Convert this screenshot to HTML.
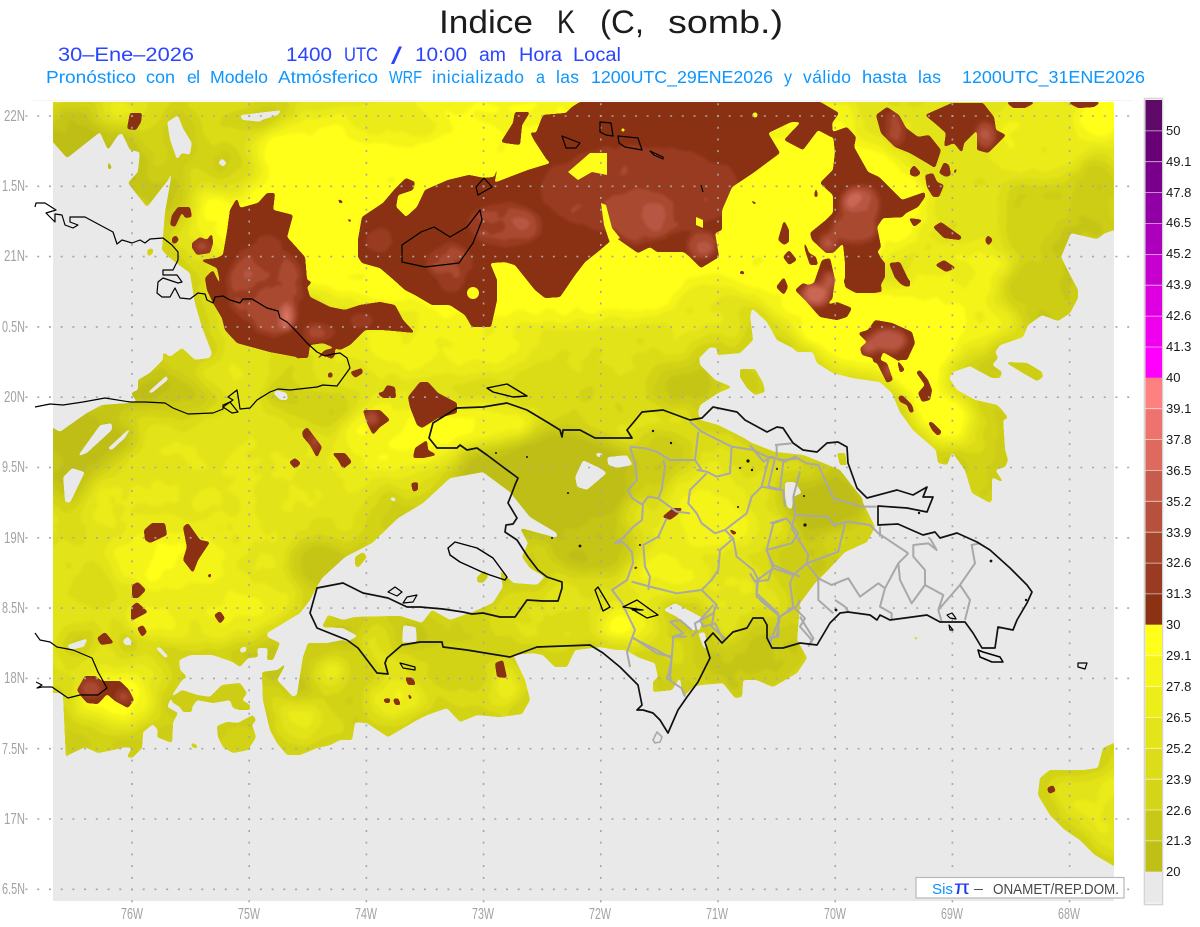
<!DOCTYPE html>
<html lang="es"><head><meta charset="utf-8"><title>Indice K</title>
<style>html,body{margin:0;padding:0;background:#fff;width:1200px;height:927px;overflow:hidden}svg{display:block}text{font-family:"Liberation Sans",sans-serif}</style>
</head><body>
<svg xmlns="http://www.w3.org/2000/svg" width="1200" height="927" viewBox="0 0 1200 927">
<defs>
<clipPath id="plot"><rect x="53" y="102" width="1061" height="799"/></clipPath>
<path id="yp" fill-rule="evenodd" clip-rule="evenodd" d="M30,130L30,80L1150,80L1150,225L1114,230 1105,233 1097,239 1071,233 1061,257 1069,273 1078,290 1078,298 1070,313 1058,321 1042,315 1028,325 1023,337 1000,345 995,352 998,358 992,365 1002,372 1000,378 992,378 970,366 953,372 949,378 957,390 975,400 997,405 1002,410 1008,418 1003,420 1005,450 1008,460 1005,467 995,470 1004,483 992,477 992,500 990,503 972,493 965,470 952,452 947,465 938,463 936,450 913,430 900,412 892,393 880,382 853,378 833,373 817,363 813,352 797,352 793,348 777,340 767,322 752,308 750,317 753,340 740,353 717,355 717,348 710,347 699,358 700,365 715,380 732,387 718,393 700,405 698,412 700,420 718,425 742,437 752,443 775,452 803,455 823,463 840,470 853,487 862,498 863,503 875,527 867,542 845,552 828,570 815,583 800,603 797,640 807,658 797,673 773,687 757,680 743,680 742,697 735,698 723,683 700,685 693,687 683,697 680,677 672,690 653,692 653,682 658,677 655,663 640,658 625,650 617,650 600,647 575,650 567,667 555,667 543,655 533,653 513,655 525,680 530,700 522,714 500,717 477,715 460,722 447,708 427,715 417,720 388,737 367,723 355,722 352,740 340,740 330,745 317,748 300,755 287,755 277,743 270,730 263,700 262,672 278,670 287,662 277,680 293,697 297,695 303,657 308,643 328,643 343,640 347,642 358,636 343,628 322,627 328,615 343,620 355,617 400,616 422,623 432,610 450,620 473,612 493,603 503,587 500,570 513,583 537,585 545,577 530,568 522,557 528,543 520,528 557,538 557,533 530,517 510,492 483,472 450,478 423,503 398,518 372,543 345,557 322,578 315,590 310,600 300,613 267,633 267,637 280,643 273,660 267,660 268,648 257,648 258,657 248,658 240,667 233,662 213,655 190,655 179,660 180,670 187,677 182,680 172,695 167,707 178,713 173,722 172,743 157,737 158,730 153,724 143,732 142,748 132,758 127,757 132,748 125,747 113,750 98,753 85,747 68,755 66,759 63,693 30,693 30,420 53,428 60,432 67,427 87,413 102,405 130,403 137,402 131,393 138,390 138,380 150,373 163,360 163,352 170,357 182,348 195,360 210,358 212,353 202,327 195,303 190,273 170,258 162,250 163,238 165,213 172,173 173,167 168,180 147,207 128,183 138,172 140,152 130,150 122,133 118,135 108,150 100,132 67,158 53,142Z
M167,122 178,115 183,128 192,143 190,155 182,153 177,160 170,140Z
M240,115 282,110 278,115 262,120 260,122 242,120Z
M218,163 222,158 227,163 223,167Z
M147,393 167,375 168,380 152,393Z
M277,390 287,393 288,400 280,400 273,393Z
M77,457 100,425 112,423 112,430 87,453Z
M107,449 133,425 125,438 112,450Z
M63,477 72,468 85,472 70,503 65,502Z
M388,498 395,497 396,503Z
M575,477 583,460 600,468 607,473 587,490 577,487Z
M607,457 627,455 633,465 617,468 608,465Z
M595,453 602,453 603,457 597,457Z
M663,610 675,603 703,618 700,630 690,630 677,617Z
M698,633 705,632 708,650 703,647Z
M785,482 795,482 802,493 793,497 792,510 787,507 785,497Z
M67,645 88,638 84,647 70,650Z
M155,648 160,647 169,657 165,658Z
M123,640 128,636 134,645 124,645Z
M240,648 247,646 246,652 240,653Z
M403,625 416,627 417,642 402,643Z
M740,369 755,369 763,383 765,392 755,395 747,388 740,377Z
M1005,362 1027,363 1042,372 1043,377 1037,381 1023,373Z
M837,453 845,453 847,465 840,465Z
M1160,735L1114,743 1103,748 1098,768 1085,770 1050,770 1040,778 1038,795 1050,815 1065,830 1080,840 1095,855 1114,866 1160,880Z
M190,742 197,745 198,748 193,748Z
M217,726 227,722 238,723 253,715 256,720 252,725 256,737 248,750 233,753 223,747 218,737Z
M172,697 182,690 197,695 210,697 222,685 240,683 247,693 242,700 250,705 250,710 240,710 233,708 230,700 213,703 197,700 192,707 192,712 183,712 180,707 172,702Z
M355,557 363,552 367,557 358,568 355,565Z
M108,160 112,168 108,170Z
M147,250 153,248 153,253 148,257Z
M913,635 918,638 916,641Z
M477,577 485,570 488,577 483,583 477,582Z"/>
<clipPath id="yc"><use href="#yp"/></clipPath>
<clipPath id="bc"><path d="M358,240 362,217 383,203 394,190 406,178 415,182 413,190 398,195 396,207 406,217 417,207 425,190 448,180 469,175 484,178 494,177 499,160 497,173 494,183 528,170 551,163 547,160 534,140 530,132 536,133 543,115 566,113 572,107 580,102 820,102 822,103 839,113 832,123 833,138 818,130 803,150 784,140 801,122 791,122 768,133 780,153 753,173 732,187 722,210 722,230 715,233 719,257 701,268 690,257 684,252 657,252 650,247 638,253 615,237 600,250 585,262 575,275 560,297 545,298 535,290 515,265 505,262 490,263 497,280 497,300 491,327 472,327 465,315 450,305 432,305 415,295 405,290 394,280 380,268 362,263 358,257Z
M501,142 513,123 515,112 530,112 522,125 520,145 505,143Z
M876,115 887,107 899,115 906,128 918,137 929,135 941,150 935,168 927,163 910,153 895,147 881,133Z
M925,115 952,103 983,103 994,117 996,130 1006,135 998,143 988,153 977,150 977,130 964,143 962,153 954,143 944,147 946,133 937,125Z
M1006,102 1036,102 1025,108 1013,108Z
M1067,102 1101,102 1094,107 1078,108Z
M910,170 914,165 921,173 916,177 910,175Z
M939,173 944,162 949,165 951,175 946,177Z
M954,170 969,160 958,167 954,177Z
M925,175 933,173 937,182 944,185 939,197 933,197 927,187Z
M833,132 847,127 856,137 854,147 868,172 879,177 902,200 925,192 925,197 918,207 906,213 902,217 923,220 914,227 908,217 883,218 877,227 881,247 877,252 887,260 876,253 864,263 845,262 843,243 833,213 833,195 820,183 833,170 835,153Z
M889,263 900,262 910,283 906,287 895,278Z
M845,262 864,263 876,253 885,263 885,277 876,293 856,293 845,287Z
M822,260 830,258 835,280 832,300 795,290 814,283Z
M795,290 803,283 813,287 827,280 833,297 827,305 837,302 852,308 847,317 837,320 820,317 805,300Z
M843,280 880,280 882,292 860,293 847,288Z
M897,280 910,280 910,287 902,285Z
M778,240 784,220 789,230 789,242 784,245Z
M783,257 789,250 797,260 789,265Z
M933,227 941,222 962,237 960,240 944,238Z
M985,240 988,235 993,240 988,246Z
M935,265 944,260 956,268 946,272Z
M776,287 784,277 788,287 784,295Z
M803,237 809,253 816,257 818,265 810,265 805,250Z
M810,233 826,220 833,213 843,243 833,253 826,253 812,240Z
M738,273 743,270 745,275Z
M747,198 757,203 755,205Z
M814,197 816,185 818,197Z
M130,113 142,113 141,122 136,130 127,129Z
M337,198 344,202 340,204Z
M346,218 352,220 350,223Z
M178,207 190,207 192,217 185,218 182,212 175,227 170,225 172,215Z
M172,238 176,235 179,240 175,244 172,243Z
M192,243 200,237 207,240 212,233 213,243 210,253 197,255 192,248Z
M230,210 237,198 240,208 258,203 267,193 275,193 273,210 293,215 287,237 305,257 307,280 312,282 307,287 310,297 330,307 345,310 360,305 380,302 395,305 403,320 415,333 395,331 383,330 365,330 350,345 340,350 323,343 310,345 308,358 298,358 298,363 297,357 270,352 237,343 225,330 222,318 213,303 207,290 205,278 213,270 222,290 217,268 200,260 217,258 223,255 227,232Z
M317,358 325,350 335,348 335,355 332,359 323,355 317,360Z
M328,373 332,372 333,377 328,378Z
M350,372 362,368 363,373 355,378Z
M377,393 383,392 387,385 395,387 396,398 383,398Z
M408,397 420,382 428,382 438,393 457,403 457,413 438,418 422,428 417,425 410,407Z
M363,410 380,410 390,420 380,427 373,435 367,423Z
M302,432 307,427 322,447 317,458 310,445 303,437Z
M332,453 345,453 352,462 343,469 338,460Z
M289,462 295,458 301,463 295,469Z
M413,458 415,448 427,440 428,450 437,455 423,458Z
M411,483 418,482 418,490 413,492Z
M144,530 152,523 165,523 167,535 150,543 145,540Z
M183,527 188,523 200,540 210,542 198,560 193,573 183,560 187,547Z
M207,575 212,573 210,579Z
M132,585 138,582 146,590 138,598 132,598Z
M131,607 137,602 148,612 131,621Z
M137,628 143,625 147,632 142,637Z
M97,638 105,632 114,643 101,645Z
M214,615 220,611 225,618 220,624Z
M77,690 85,676 95,676 102,681 120,681 129,690 134,700 128,708 115,701 107,694 98,704 87,703 81,696Z
M383,699 390,698 390,703 385,703Z
M393,699 398,698 401,705 395,705Z
M405,677 413,678 416,685 408,685Z
M407,692 412,697 410,701Z
M495,663 503,660 507,678 497,677Z
M662,517 673,508 683,508 677,515 670,520Z
M728,528 738,533 733,535Z
M633,567 640,566 635,570Z
M868,330 875,320 892,323 912,332 915,343 907,360 897,360 900,363 905,370 900,373 897,360 883,352 880,360 887,363 893,380 887,383 877,363 873,362 873,358 862,355 860,348 867,342 858,333Z
M916,372 920,370 928,380 932,390 930,400 922,402 918,393 925,385Z
M898,397 902,395 912,405 914,412 910,413 907,405 900,402Z
M928,422 932,422 942,432 938,436 932,430Z
M1047,788 1053,785 1056,791 1049,794Z"/></clipPath>
<filter id="goo" filterUnits="userSpaceOnUse" x="0" y="0" width="1200" height="927" color-interpolation-filters="sRGB">
<feGaussianBlur in="SourceGraphic" stdDeviation="1.3"/>
<feColorMatrix type="matrix" values="1 0 0 0 0 0 1 0 0 0 0 0 1 0 0 0 0 0 14 -6"/>
</filter>
<filter id="fy" filterUnits="userSpaceOnUse" x="0" y="0" width="1200" height="927" color-interpolation-filters="sRGB">
<feGaussianBlur in="SourceGraphic" stdDeviation="9" result="b"/>
<feTurbulence type="fractalNoise" baseFrequency="0.035" numOctaves="2" seed="7" result="n"/>
<feColorMatrix in="n" type="matrix" values="1 0 0 0 0 1 0 0 0 0 1 0 0 0 0 0 0 0 0 1" result="g"/>
<feComposite in="b" in2="g" operator="arithmetic" k1="0" k2="1" k3="0.22" k4="-0.11" result="c"/>
<feComponentTransfer in="c">
<feFuncR type="discrete" tableValues=".749 .776 .804 .831 .863 .894 .925 .96 1"/>
<feFuncG type="discrete" tableValues=".749 .776 .804 .831 .863 .894 .925 .96 1"/>
<feFuncB type="discrete" tableValues=".09 .09 .09 .09 .09 .1 .1 .1 .1"/>
<feFuncA type="linear" slope="0" intercept="1"/>
</feComponentTransfer>
</filter>
<filter id="fb" filterUnits="userSpaceOnUse" x="0" y="0" width="1200" height="927" color-interpolation-filters="sRGB">
<feGaussianBlur in="SourceGraphic" stdDeviation="4" result="b"/>
<feTurbulence type="fractalNoise" baseFrequency="0.05" numOctaves="2" seed="3" result="n"/>
<feColorMatrix in="n" type="matrix" values="1 0 0 0 0 1 0 0 0 0 1 0 0 0 0 0 0 0 0 1" result="g"/>
<feComposite in="b" in2="g" operator="arithmetic" k1="0" k2="1" k3="0.25" k4="-0.125" result="c"/>
<feComponentTransfer in="c">
<feFuncR type="discrete" tableValues=".545 .6 .66 .72 .79 .86"/>
<feFuncG type="discrete" tableValues=".196 .235 .29 .34 .4 .46"/>
<feFuncB type="discrete" tableValues=".08 .13 .19 .26 .33 .38"/>
<feFuncA type="linear" slope="0" intercept="1"/>
</feComponentTransfer>
</filter>
</defs>
<rect width="1200" height="927" fill="#fff"/>

<!-- titles -->
<g fill="#1c1c1c" font-size="32">
<text x="439" y="33" textLength="94" lengthAdjust="spacingAndGlyphs">Indice</text>
<text x="557" y="33" textLength="18" lengthAdjust="spacingAndGlyphs">K</text>
<text x="600" y="33" textLength="44" lengthAdjust="spacingAndGlyphs">(C,</text>
<text x="668" y="33" textLength="115" lengthAdjust="spacingAndGlyphs">somb.)</text>
</g>
<g fill="#2a44ff" font-size="19">
<text x="58" y="61" textLength="136" lengthAdjust="spacingAndGlyphs">30–Ene–2026</text>
<text x="286" y="61" textLength="46" lengthAdjust="spacingAndGlyphs">1400</text>
<text x="344" y="61" textLength="34" lengthAdjust="spacingAndGlyphs">UTC</text>
<text x="391" y="64" font-size="24" textLength="11" lengthAdjust="spacingAndGlyphs">/</text>
<text x="415" y="61" textLength="52" lengthAdjust="spacingAndGlyphs">10:00</text>
<text x="479" y="61" textLength="27" lengthAdjust="spacingAndGlyphs">am</text>
<text x="519" y="61" textLength="43" lengthAdjust="spacingAndGlyphs">Hora</text>
<text x="573" y="61" textLength="48" lengthAdjust="spacingAndGlyphs">Local</text>
</g>
<g fill="#0c96ff" font-size="17.5">
<text x="46" y="83" textLength="90" lengthAdjust="spacingAndGlyphs">Pronóstico</text>
<text x="146" y="83" textLength="29" lengthAdjust="spacingAndGlyphs">con</text>
<text x="187" y="83" textLength="13" lengthAdjust="spacing">el</text>
<text x="210" y="83" textLength="58" lengthAdjust="spacingAndGlyphs">Modelo</text>
<text x="278" y="83" textLength="100" lengthAdjust="spacingAndGlyphs">Atmósferico</text>
<text x="389" y="83" textLength="33" lengthAdjust="spacingAndGlyphs">WRF</text>
<text x="432" y="83" textLength="92" lengthAdjust="spacing">inicializado</text>
<text x="536" y="83" textLength="9" lengthAdjust="spacingAndGlyphs">a</text>
<text x="556" y="83" textLength="23" lengthAdjust="spacing">las</text>
<text x="591" y="83" textLength="182" lengthAdjust="spacingAndGlyphs">1200UTC_29ENE2026</text>
<text x="784" y="83" textLength="8" lengthAdjust="spacingAndGlyphs">y</text>
<text x="803" y="83" textLength="48" lengthAdjust="spacing">válido</text>
<text x="862" y="83" textLength="45" lengthAdjust="spacingAndGlyphs">hasta</text>
<text x="918" y="83" textLength="23" lengthAdjust="spacing">las</text>
<text x="962" y="83" textLength="183" lengthAdjust="spacingAndGlyphs">1200UTC_31ENE2026</text>
</g>

<!-- plot background -->
<line x1="33" y1="100.5" x2="1132" y2="100.5" stroke="#f3f3f3"/>
<rect x="53" y="102" width="1061" height="799" fill="#e9e9e9"/>

<g clip-path="url(#plot)">
<g filter="url(#goo)">
<g clip-path="url(#yc)">
<g filter="url(#fy)">
<rect x="0" y="0" width="1200" height="927" fill="#999"/>
<!-- top -->
<ellipse cx="560" cy="205" rx="370" ry="115" fill="#f4f4f4"/>
<ellipse cx="640" cy="115" rx="220" ry="30" fill="#e0e0e0"/>
<ellipse cx="110" cy="145" rx="85" ry="45" fill="#222"/>
<ellipse cx="190" cy="130" rx="55" ry="40" fill="#777"/>
<ellipse cx="120" cy="115" rx="25" ry="15" fill="#bbb"/>
<ellipse cx="225" cy="165" rx="35" ry="30" fill="#777"/>
<ellipse cx="165" cy="195" rx="30" ry="30" fill="#555"/>
<ellipse cx="395" cy="125" rx="50" ry="14" fill="#aaa"/>
<ellipse cx="1060" cy="210" rx="55" ry="70" fill="#555"/>
<ellipse cx="1040" cy="140" rx="60" ry="40" fill="#bbb"/>
<ellipse cx="1105" cy="115" rx="30" ry="25" fill="#fff"/>
<ellipse cx="1095" cy="195" rx="25" ry="40" fill="#444"/>
<ellipse cx="970" cy="295" rx="70" ry="50" fill="#ccc"/>
<ellipse cx="1040" cy="290" rx="40" ry="30" fill="#444"/>
<ellipse cx="880" cy="335" rx="85" ry="45" fill="#fff"/>
<ellipse cx="790" cy="285" rx="60" ry="35" fill="#eee"/>
<!-- mid band -->
<ellipse cx="270" cy="372" rx="40" ry="14" fill="#666"/>
<ellipse cx="440" cy="345" rx="100" ry="30" fill="#ccc"/>
<ellipse cx="320" cy="408" rx="40" ry="20" fill="#555"/>
<ellipse cx="165" cy="395" rx="60" ry="22" fill="#333"/>
<ellipse cx="235" cy="375" rx="40" ry="20" fill="#aaa"/>
<ellipse cx="560" cy="395" rx="110" ry="25" fill="#777"/>
<ellipse cx="680" cy="385" rx="35" ry="22" fill="#333"/>
<ellipse cx="710" cy="310" rx="40" ry="28" fill="#aaa"/>
<ellipse cx="80" cy="450" rx="55" ry="50" fill="#222"/>
<ellipse cx="90" cy="540" rx="40" ry="45" fill="#888"/>
<ellipse cx="250" cy="510" rx="170" ry="80" fill="#a8a8a8"/>
<ellipse cx="170" cy="560" rx="60" ry="30" fill="#e0e0e0"/>
<ellipse cx="395" cy="435" rx="55" ry="35" fill="#e0e0e0"/>
<ellipse cx="340" cy="520" rx="50" ry="28" fill="#999"/>
<ellipse cx="318" cy="562" rx="30" ry="24" fill="#222"/>
<ellipse cx="390" cy="520" rx="30" ry="15" fill="#555"/>
<ellipse cx="110" cy="610" rx="55" ry="25" fill="#888"/>
<ellipse cx="245" cy="610" rx="50" ry="25" fill="#ccc"/>
<!-- bottom left -->
<ellipse cx="115" cy="700" rx="35" ry="24" fill="#fff"/>
<ellipse cx="60" cy="640" rx="30" ry="30" fill="#999"/>
<ellipse cx="90" cy="735" rx="35" ry="18" fill="#666"/>
<ellipse cx="150" cy="660" rx="25" ry="25" fill="#aaa"/>
<ellipse cx="155" cy="620" rx="30" ry="20" fill="#ddd"/>
<!-- Haiti -->
<ellipse cx="545" cy="480" rx="90" ry="55" fill="#000"/>
<ellipse cx="590" cy="545" rx="45" ry="32" fill="#222"/>
<ellipse cx="470" cy="425" rx="70" ry="22" fill="#ddd"/>
<ellipse cx="435" cy="435" rx="25" ry="22" fill="#fff"/>
<ellipse cx="450" cy="640" rx="70" ry="16" fill="#555"/>
<ellipse cx="565" cy="620" rx="40" ry="22" fill="#888"/>
<ellipse cx="625" cy="628" rx="28" ry="18" fill="#eee"/>
<!-- DR -->
<ellipse cx="660" cy="465" rx="35" ry="35" fill="#444"/>
<ellipse cx="705" cy="495" rx="40" ry="28" fill="#bbb"/>
<ellipse cx="675" cy="540" rx="40" ry="22" fill="#aaa"/>
<ellipse cx="715" cy="525" rx="35" ry="28" fill="#ddd"/>
<ellipse cx="665" cy="575" rx="40" ry="25" fill="#ccc"/>
<ellipse cx="730" cy="590" rx="30" ry="20" fill="#aaa"/>
<ellipse cx="760" cy="470" rx="30" ry="16" fill="#888"/>
<ellipse cx="825" cy="505" rx="40" ry="30" fill="#000"/>
<ellipse cx="800" cy="565" rx="30" ry="35" fill="#444"/>
<ellipse cx="770" cy="640" rx="30" ry="25" fill="#444"/>
<ellipse cx="680" cy="645" rx="30" ry="25" fill="#777"/>
<ellipse cx="745" cy="660" rx="50" ry="20" fill="#333"/>
<!-- South Haiti -->
<ellipse cx="325" cy="680" rx="50" ry="40" fill="#555"/>
<ellipse cx="302" cy="715" rx="20" ry="13" fill="#ccc"/>
<ellipse cx="332" cy="672" rx="16" ry="14" fill="#ccc"/>
<ellipse cx="400" cy="698" rx="30" ry="14" fill="#ddd"/>
<ellipse cx="460" cy="675" rx="50" ry="25" fill="#666"/>
<ellipse cx="510" cy="680" rx="14" ry="14" fill="#eee"/>
<!-- lobe -->
<ellipse cx="925" cy="375" rx="35" ry="30" fill="#fff"/>
<ellipse cx="945" cy="420" rx="35" ry="28" fill="#fff"/>
<ellipse cx="985" cy="445" rx="18" ry="35" fill="#666"/>
<!-- PR -->
<ellipse cx="1095" cy="795" rx="22" ry="40" fill="#aaa"/>
<!-- boundary fringe -->
<use href="#yp" fill="none" stroke="#000" stroke-width="10" stroke-opacity=".8"/>
</g>
</g>
</g>

<g filter="url(#goo)">
<g clip-path="url(#bc)">
<g filter="url(#fb)">
<rect x="0" y="0" width="1200" height="927" fill="#000"/>
<ellipse cx="265" cy="285" rx="38" ry="42" fill="#555"/>
<ellipse cx="272" cy="312" rx="24" ry="24" fill="#666"/>
<ellipse cx="287" cy="318" rx="7" ry="14" fill="#ddd"/>
<ellipse cx="243" cy="277" rx="14" ry="12" fill="#777"/>
<ellipse cx="320" cy="332" rx="18" ry="9" fill="#666"/>
<ellipse cx="362" cy="320" rx="12" ry="7" fill="#555"/>
<ellipse cx="268" cy="252" rx="18" ry="18" fill="#444"/>
<ellipse cx="92" cy="688" rx="12" ry="10" fill="#666"/>
<ellipse cx="124" cy="697" rx="8" ry="7" fill="#777"/>
<ellipse cx="202" cy="246" rx="9" ry="7" fill="#777"/>
<ellipse cx="505" cy="225" rx="38" ry="22" fill="#555"/>
<ellipse cx="520" cy="222" rx="12" ry="10" fill="#888"/>
<ellipse cx="450" cy="262" rx="24" ry="18" fill="#555"/>
<ellipse cx="452" cy="282" rx="13" ry="12" fill="#555"/>
<ellipse cx="380" cy="240" rx="16" ry="14" fill="#444"/>
<ellipse cx="640" cy="190" rx="100" ry="45" fill="#444"/>
<ellipse cx="640" cy="215" rx="38" ry="28" fill="#666"/>
<ellipse cx="655" cy="218" rx="14" ry="18" fill="#888"/>
<ellipse cx="702" cy="245" rx="15" ry="14" fill="#777"/>
<ellipse cx="706" cy="250" rx="6" ry="6" fill="#bbb"/>
<ellipse cx="860" cy="205" rx="20" ry="20" fill="#888"/>
<ellipse cx="855" cy="200" rx="9" ry="9" fill="#bbb"/>
<ellipse cx="855" cy="228" rx="24" ry="16" fill="#666"/>
<ellipse cx="895" cy="130" rx="10" ry="18" fill="#666"/>
<ellipse cx="985" cy="135" rx="10" ry="14" fill="#888"/>
<ellipse cx="815" cy="296" rx="15" ry="11" fill="#bbb"/>
<ellipse cx="812" cy="290" rx="7" ry="7" fill="#eee"/>
<ellipse cx="888" cy="340" rx="20" ry="12" fill="#999"/>
<ellipse cx="868" cy="347" rx="8" ry="7" fill="#bbb"/>
<ellipse cx="890" cy="370" rx="6" ry="8" fill="#888"/>
<ellipse cx="830" cy="280" rx="8" ry="10" fill="#999"/>
<ellipse cx="828" cy="243" rx="9" ry="10" fill="#888"/>
<ellipse cx="372" cy="418" rx="7" ry="6" fill="#999"/>
<ellipse cx="314" cy="442" rx="5" ry="10" fill="#777"/>
</g>
</g>
</g>
<!-- yellow holes in brown -->
<g fill="#fdfd1a">
<path d="M568,172 590,153 607,153 607,175 592,172 578,180Z"/>
<path d="M601,203 606,205 612,228 620,238 610,243 604,225Z"/>
<path d="M696,217 703,220 703,228 696,225Z"/>
<circle cx="473" cy="293" r="6"/>
<circle cx="755" cy="115" r="2.5"/>
<circle cx="623" cy="130" r="1.5"/>
</g>
</g>

<!-- grid -->
<g stroke="#a6a6a6" stroke-width="1.6" stroke-dasharray="2 9.72" fill="none">
<path d="M25.5,116H1132M25.5,186.3H1132M25.5,256.6H1132M25.5,326.9H1132M25.5,397.2H1132M25.5,467.5H1132M25.5,537.8H1132M25.5,608.1H1132M25.5,678.4H1132M25.5,748.7H1132M25.5,819H1132M25.5,889.3H1132"/>
<path d="M132,103.3V906M249.2,103.3V906M366.4,103.3V906M483.6,103.3V906M600.8,103.3V906M718,103.3V906M835.2,103.3V906M952.4,103.3V906M1069.6,103.3V906"/>
</g>

<!-- provinces -->
<g fill="none" stroke="#a8a8a8" stroke-width="2" stroke-linejoin="round">
<path d="M630,447 635,463 637,480 628,490 632,498 643,505 642,520 633,527 623,538 615,543 623,542 632,552 633,563 627,580 612,590 622,603 635,630 627,652 630,667"/>
<g transform="translate(400,380) scale(.3333)" stroke-width="6">
<path d="M690,200L735,205 770,215 810,240 885,240 905,270M885,240L895,155M870,125L905,155 995,200 1060,210 1100,230 1150,240 1200,235M995,200L990,280 950,290 920,275 890,270M790,240L795,260 785,330 775,355 745,350 725,375M920,280L870,330 865,370 890,400 905,430 945,460 975,450 1040,400 1055,350 1085,320 1105,240M1085,320L1140,330 1150,245M775,355L830,395 870,400M800,415L775,470 730,495 735,560 750,590 745,630M975,450L1000,475 960,510 955,570 935,600 905,630 830,640 750,620 695,605M1000,475L1010,530 1060,570 1075,600 1070,640 1135,700 1135,770 1100,775M1110,430L1160,415 1195,460 1175,490 1100,510 1120,555 1200,590M1120,555L1105,600 1065,605M905,630L950,675 940,700 885,730 890,755 875,770M945,680L935,740 975,775M695,770L770,820 815,830 810,900M815,770L860,770"/>
</g>
<g transform="translate(750,400) scale(.3333)" stroke-width="6">
<path d="M75,135L125,130M80,135L80,170M0,135L40,185 65,170 105,185 135,170 170,190 205,195 225,240 250,295 335,320 380,320M150,215L130,290 135,345 235,350 250,375 295,365 360,375 385,400 475,460M65,170L75,175 55,260 100,270 105,320M135,345L125,385 175,465 170,490 265,455 285,370M100,360L70,370 50,450 70,505 130,525 170,490M70,505L15,545 0,520M170,490L205,535 205,600 250,640M205,535L245,555 295,535 330,590 385,550 405,565 390,620 425,640 425,660M475,460L445,490 450,540 485,610 525,555 525,510 490,470 490,435 535,430 560,450 540,415M405,565L445,490M525,555L580,585 565,630 630,555 660,600 645,660M630,555L675,490 665,435 690,430M565,630L575,665M130,525L120,550 130,620 90,650 80,710 50,715M130,620L165,655 150,680 185,720 175,740M20,545L20,590 80,635M390,380L390,410M255,600L285,620 295,635"/>
</g>
<g transform="translate(600,600) scale(.3333)" stroke-width="6">
<path d="M100,115L170,150 215,175 205,225 200,235 245,265 255,290M215,175L220,110 250,100 210,65M210,65L240,60 275,90M340,15L300,60 310,80 345,70 370,120M480,0L540,50 510,130M540,50L590,20 600,0M600,50L640,115 630,135"/>
</g>
<path d="M653,740 657,732 662,737 660,742 655,743Z" stroke-width="1.6"/>
</g>

<!-- coasts -->
<g fill="none" stroke="#000" stroke-width="1.2" stroke-linejoin="round">
<path d="M35,207 36,203 45,203 56,210 46,213 55,222 55,214 62,215 65,225 73,228 78,225 70,222 70,217 85,217 98,224 113,232 117,244 122,240 132,243 140,240 145,243 150,239 163,238 172,245 178,252 178,260 173,270 163,270 163,275 177,275 182,282 178,283 163,278 158,282 157,293 162,297 170,297 175,288 180,298 190,299 198,293 205,294 207,300 213,303 215,297 223,296 230,300 240,303 243,299 252,299 267,308 278,311 280,318 287,322 297,332 307,343 317,352 325,356 333,354 340,353 347,358 350,368 345,375 337,386 323,385 317,387 290,390 278,389 270,392 257,400 250,408 240,409 239,402 237,390 228,397 233,400 223,407 232,413 238,412 230,402 223,405 223,409 213,413 188,414 173,408 165,403 145,402 130,402 105,398 83,402 63,405 50,404 35,407"/>
<path d="M35,633 40,640 50,642 57,647 73,650 92,658 98,672 107,688 98,695 90,695 80,695 68,698 52,687 42,687 37,688 42,685 36,682"/>
<path d="M402,245 421,232 434,227 450,237 467,227 480,210 482,220 473,243 459,263 425,267 402,262Z"/>
<path d="M476,187 484,178 492,187 478,195Z"/>
<path d="M562,136 580,143 576,148 566,148Z"/>
<path d="M600,122 611,123 613,136 606,135 600,132Z"/>
<path d="M618,136 638,138 642,150 625,147 619,143Z"/>
<path d="M650,151 663,157 663,159 654,155Z"/>
<path d="M701,185 703,192"/>
<path d="M388,592 395,587 402,592 397,596Z"/>
<path d="M407,597 417,595 413,602 403,603Z"/>
<path d="M400,663 415,667 415,670 403,668Z"/>
<path d="M1078,663 1087,663 1085,669 1078,667Z"/>
<path d="M949,625 953,630 950,630Z"/>
<path d="M947,615 952,613 955,617 956,619 950,618Z"/>
<path d="M978,650 983,652 1000,657 1003,662 992,662 980,657Z" stroke-width="1.5"/>
<path d="M487,388 507,384 527,396 513,397 493,392Z" stroke-width="1.4"/>
<path d="M448,548 455,542 477,548 493,558 507,577 505,580 490,575 482,572 460,562 450,555Z" stroke-width="1.4"/>
<path d="M623,607 637,600 658,615 647,618 630,608ZM630,608 643,610 632,610" stroke-width="1.3"/>
<path d="M595,590 598,587 610,607 603,611Z" stroke-width="1.3"/>
<path stroke-width="1.7" stroke="#111" d="M457,408 433,423 429,438 437,448 457,448 460,445 467,450 477,448 487,455 503,467 518,478 515,485 512,493 508,503 517,518 513,524 506,525 505,532 517,540 528,557 538,570 547,577 562,582 562,588 558,601 543,601 527,600 520,610 515,617 500,617 483,613 472,614 463,612 443,609 420,607 407,607 388,598 363,593 343,583 317,588 310,613 317,628 347,640 358,648 377,673 388,674 385,663 387,658 402,645 420,642 442,642 443,647 467,650 510,657 537,647 590,645 603,653 620,667 638,685 642,705 637,710 643,710 653,713 660,720 668,733 678,710 687,697 698,682 710,658 705,642 713,633 722,643 733,632 747,628 753,618 763,618 767,625 767,638 772,648 783,648 800,643 817,645 830,623 835,618 840,613 848,612 870,615 877,620 880,615 890,620 927,615 940,622 965,622 973,633 982,648 995,648 998,627 1013,630 1017,620 1027,603 1032,592 1027,585 1010,568 990,550 977,542 957,533 940,538 935,532 923,535 907,528 898,524 878,525 878,506 907,508 927,512 933,497 923,497 927,487 913,495 897,490 867,498 857,488 848,463 847,447 838,442 827,443 817,452 803,450 793,443 783,428 777,427 767,432 745,420 737,412 713,407 702,418 690,420 663,410 642,412 633,423 627,430 632,438 613,438 595,438 580,430 563,430 562,437 560,430 547,422 527,410 507,403 483,407 457,408Z"/>
</g>
<g fill="#111">
<circle cx="653" cy="431" r="1.2"/><circle cx="671" cy="443" r="1.2"/><circle cx="748" cy="461" r="1.6"/><circle cx="740" cy="468" r="1"/><circle cx="752" cy="470" r="1.2"/><circle cx="777" cy="469" r="1"/><circle cx="738" cy="507" r="1"/><circle cx="640" cy="545" r="1"/><circle cx="552" cy="538" r="1"/><circle cx="580" cy="546" r="1.4"/><circle cx="568" cy="493" r="1"/><circle cx="496" cy="453" r="1"/><circle cx="527" cy="457" r="1"/><circle cx="804" cy="496" r="1"/><circle cx="805" cy="525" r="1.6"/><circle cx="991" cy="561" r="1.4"/><circle cx="1026" cy="600" r="1.2"/><circle cx="836" cy="610" r="1.4"/><circle cx="919" cy="513" r="1.2"/>
</g>

<!-- axis labels -->
<g fill="#a2a2a2" font-size="15.5" text-anchor="end">
<text x="25" y="121" textLength="21" lengthAdjust="spacingAndGlyphs">22N</text>
<text x="25" y="191" textLength="23" lengthAdjust="spacingAndGlyphs">1.5N</text>
<text x="25" y="261" textLength="21" lengthAdjust="spacingAndGlyphs">21N</text>
<text x="25" y="332" textLength="23" lengthAdjust="spacingAndGlyphs">0.5N</text>
<text x="25" y="402" textLength="21" lengthAdjust="spacingAndGlyphs">20N</text>
<text x="25" y="472" textLength="23" lengthAdjust="spacingAndGlyphs">9.5N</text>
<text x="25" y="543" textLength="21" lengthAdjust="spacingAndGlyphs">19N</text>
<text x="25" y="613" textLength="23" lengthAdjust="spacingAndGlyphs">8.5N</text>
<text x="25" y="683" textLength="21" lengthAdjust="spacingAndGlyphs">18N</text>
<text x="25" y="754" textLength="23" lengthAdjust="spacingAndGlyphs">7.5N</text>
<text x="25" y="824" textLength="21" lengthAdjust="spacingAndGlyphs">17N</text>
<text x="25" y="894" textLength="23" lengthAdjust="spacingAndGlyphs">6.5N</text>
</g>
<g fill="#a2a2a2" font-size="15.5">
<text x="121" y="919" textLength="22" lengthAdjust="spacingAndGlyphs">76W</text>
<text x="238" y="919" textLength="22" lengthAdjust="spacingAndGlyphs">75W</text>
<text x="355" y="919" textLength="22" lengthAdjust="spacingAndGlyphs">74W</text>
<text x="472" y="919" textLength="22" lengthAdjust="spacingAndGlyphs">73W</text>
<text x="589" y="919" textLength="22" lengthAdjust="spacingAndGlyphs">72W</text>
<text x="706" y="919" textLength="22" lengthAdjust="spacingAndGlyphs">71W</text>
<text x="824" y="919" textLength="22" lengthAdjust="spacingAndGlyphs">70W</text>
<text x="941" y="919" textLength="22" lengthAdjust="spacingAndGlyphs">69W</text>
<text x="1058" y="919" textLength="22" lengthAdjust="spacingAndGlyphs">68W</text>
</g>

<!-- credit box -->
<rect x="916" y="877.5" width="208" height="20.5" fill="#fff" stroke="#b8b8b8" stroke-width="1.2"/>
<text x="932" y="894" font-size="15" fill="#1090ff" textLength="21" lengthAdjust="spacingAndGlyphs">Sis</text>
<text x="954" y="894" font-size="19" fill="#1a3cf0" textLength="16" lengthAdjust="spacingAndGlyphs">π</text>
<text x="974" y="893" font-size="14" fill="#444" textLength="9" lengthAdjust="spacingAndGlyphs">–</text>
<text x="993" y="894" font-size="15" fill="#484848" textLength="126" lengthAdjust="spacingAndGlyphs">ONAMET/REP.DOM.</text>

<!-- colour bar -->
<rect x="1144.5" y="98.5" width="18" height="806" fill="#fff" stroke="#d4d4d4" stroke-width="1.6"/>
<g>
<rect x="1145.5" y="100" width="16.5" height="30.9" fill="#5f0a68"/>
<rect x="1145.5" y="130.9" width="16.5" height="30.9" fill="#6a0076"/>
<rect x="1145.5" y="161.7" width="16.5" height="30.9" fill="#78008a"/>
<rect x="1145.5" y="192.6" width="16.5" height="30.9" fill="#9000a4"/>
<rect x="1145.5" y="223.5" width="16.5" height="30.9" fill="#ac00bc"/>
<rect x="1145.5" y="254.4" width="16.5" height="30.9" fill="#c600ce"/>
<rect x="1145.5" y="285.2" width="16.5" height="30.9" fill="#de00e0"/>
<rect x="1145.5" y="316.1" width="16.5" height="30.9" fill="#ef00ee"/>
<rect x="1145.5" y="347" width="16.5" height="30.9" fill="#ff00ff"/>
<rect x="1145.5" y="377.8" width="16.5" height="30.9" fill="#ff8080"/>
<rect x="1145.5" y="408.7" width="16.5" height="30.9" fill="#ee736e"/>
<rect x="1145.5" y="439.6" width="16.5" height="30.9" fill="#de6a5f"/>
<rect x="1145.5" y="470.5" width="16.5" height="30.9" fill="#c85c4c"/>
<rect x="1145.5" y="501.3" width="16.5" height="30.9" fill="#b7503c"/>
<rect x="1145.5" y="532.2" width="16.5" height="30.9" fill="#a5452e"/>
<rect x="1145.5" y="563.1" width="16.5" height="30.9" fill="#983b22"/>
<rect x="1145.5" y="593.9" width="16.5" height="30.9" fill="#8b3214"/>
<rect x="1145.5" y="624.8" width="16.5" height="30.9" fill="#ffff1a"/>
<rect x="1145.5" y="655.7" width="16.5" height="30.9" fill="#f5f51a"/>
<rect x="1145.5" y="686.6" width="16.5" height="30.9" fill="#eded1a"/>
<rect x="1145.5" y="717.4" width="16.5" height="30.9" fill="#e4e41a"/>
<rect x="1145.5" y="748.3" width="16.5" height="30.9" fill="#dcdc18"/>
<rect x="1145.5" y="779.2" width="16.5" height="30.9" fill="#d4d418"/>
<rect x="1145.5" y="810" width="16.5" height="30.9" fill="#c8c818"/>
<rect x="1145.5" y="840.9" width="16.5" height="30.9" fill="#bfbf17"/>
<rect x="1145.5" y="871.8" width="16.5" height="31" fill="#e9e9e9"/>
</g>
<path d="M1145.5,130.9h16.5M1145.5,161.7h16.5M1145.5,192.6h16.5M1145.5,223.5h16.5M1145.5,254.4h16.5M1145.5,285.2h16.5M1145.5,316.1h16.5M1145.5,347h16.5M1145.5,408.7h16.5M1145.5,439.6h16.5M1145.5,470.5h16.5M1145.5,501.3h16.5M1145.5,532.2h16.5M1145.5,563.1h16.5M1145.5,593.9h16.5M1145.5,655.7h16.5M1145.5,686.6h16.5M1145.5,717.4h16.5M1145.5,748.3h16.5M1145.5,779.2h16.5M1145.5,810h16.5M1145.5,840.9h16.5" stroke="#fff" stroke-opacity=".7" stroke-width=".8" fill="none"/>
<g fill="#1a1a1a" font-size="13">
<text x="1166" y="135">50</text>
<text x="1166" y="166">49.1</text>
<text x="1166" y="197">47.8</text>
<text x="1166" y="227">46.5</text>
<text x="1166" y="258">45.2</text>
<text x="1166" y="289">43.9</text>
<text x="1166" y="320">42.6</text>
<text x="1166" y="351">41.3</text>
<text x="1166" y="382">40</text>
<text x="1166" y="413">39.1</text>
<text x="1166" y="444">37.8</text>
<text x="1166" y="475">36.5</text>
<text x="1166" y="506">35.2</text>
<text x="1166" y="537">33.9</text>
<text x="1166" y="567">32.6</text>
<text x="1166" y="598">31.3</text>
<text x="1166" y="629">30</text>
<text x="1166" y="660">29.1</text>
<text x="1166" y="691">27.8</text>
<text x="1166" y="722">26.5</text>
<text x="1166" y="753">25.2</text>
<text x="1166" y="784">23.9</text>
<text x="1166" y="815">22.6</text>
<text x="1166" y="845">21.3</text>
<text x="1166" y="876">20</text>
</g>
</svg>
</body></html>
